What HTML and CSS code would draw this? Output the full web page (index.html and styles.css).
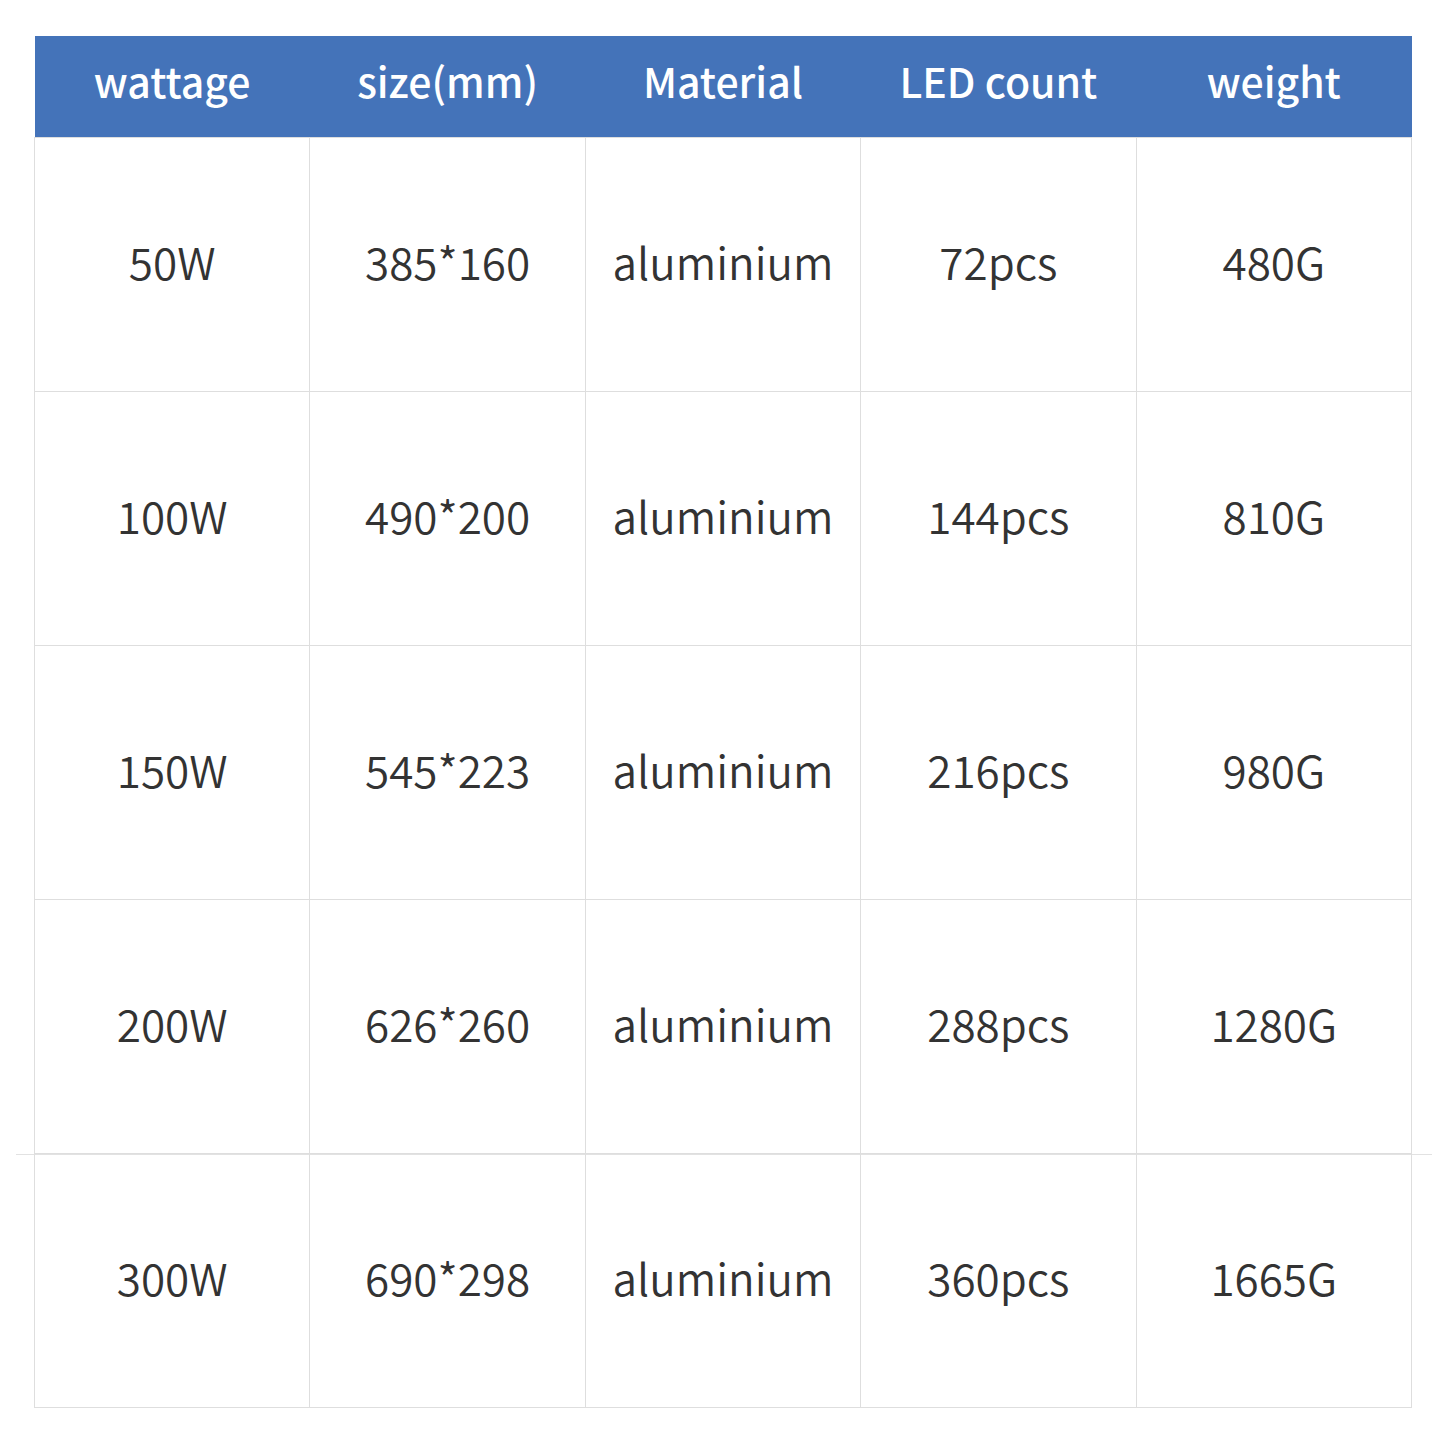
FILE: index.html
```html
<!DOCTYPE html>
<html>
<head>
<meta charset="utf-8">
<link rel="stylesheet" href="styles.css">
</head>
<body>
<div class="page">
  <div class="rule"></div>
  <table class="spec">
    <thead>
      <tr><th>wattage</th><th>size(mm)</th><th>Material</th><th>LED count</th><th>weight</th></tr>
    </thead>
    <tbody>
      <tr><td>50W</td><td>385*160</td><td>aluminium</td><td>72pcs</td><td>480G</td></tr>
      <tr><td>100W</td><td>490*200</td><td>aluminium</td><td>144pcs</td><td>810G</td></tr>
      <tr><td>150W</td><td>545*223</td><td>aluminium</td><td>216pcs</td><td>980G</td></tr>
      <tr><td>200W</td><td>626*260</td><td>aluminium</td><td>288pcs</td><td>1280G</td></tr>
      <tr><td>300W</td><td>690*298</td><td>aluminium</td><td>360pcs</td><td>1665G</td></tr>
    </tbody>
  </table>
</div>
</body>
</html>
```
FILE: styles.css
```css
html, body {
  margin: 0;
  padding: 0;
  background: #ffffff;
}
.page {
  position: relative;
  padding: 36px 28px 0 34px;
  font-family: "Noto Sans CJK SC", "Noto Sans", sans-serif;
}
.rule {
  position: absolute;
  left: 16px;
  right: 8px;
  top: 1154px;
  height: 1px;
  background: #e2e2e2;
}
.spec {
  position: relative;
  width: 1378px;
  border-collapse: collapse;
  table-layout: fixed;
}
.spec th {
  background: #4473b9;
  color: #ffffff;
  font-weight: 500;
  font-size: 41px;
  height: 87px;
  padding: 0 0 14px 0;
  text-align: center;
  vertical-align: middle;
  border: none;
}
.spec td {
  height: 245px;
  padding: 0 0 8px 0;
  text-align: center;
  vertical-align: middle;
  font-size: 44px;
  font-weight: 350;
  color: #333333;
  border: 1px solid #dedede;
}
```
